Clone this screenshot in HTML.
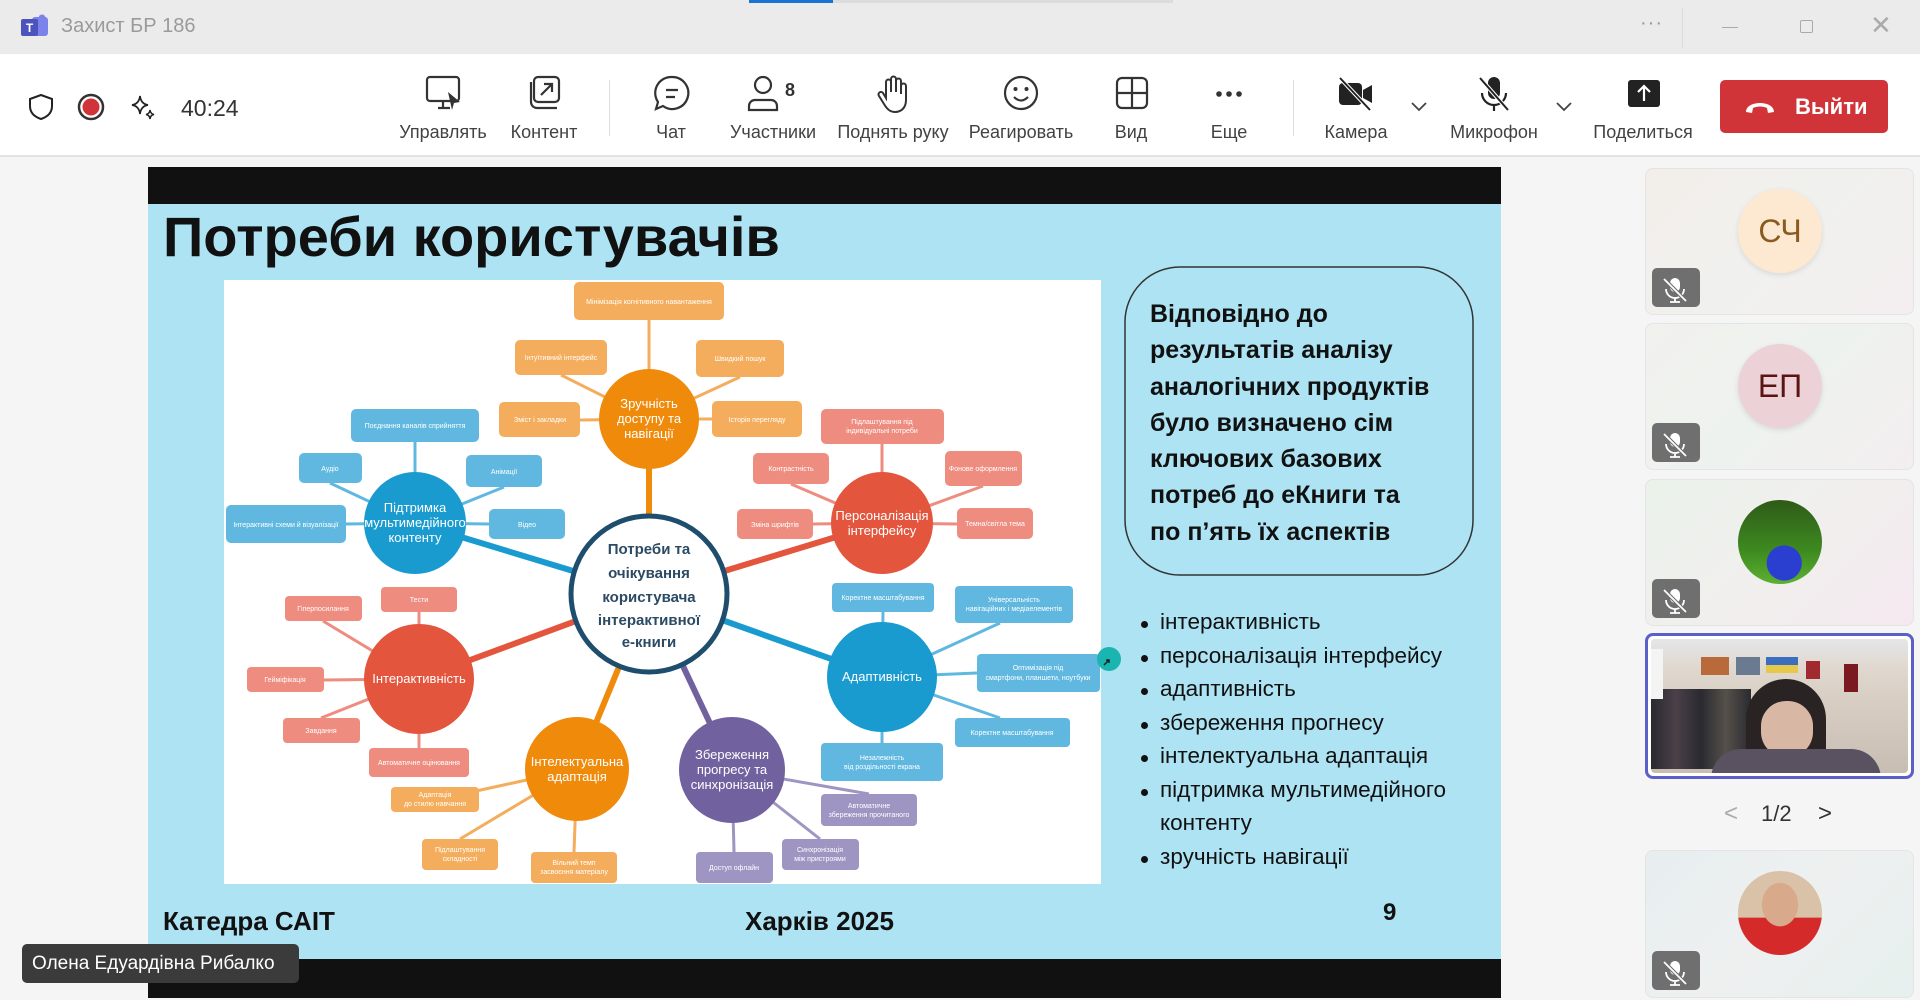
<!DOCTYPE html>
<html><head><meta charset="utf-8">
<style>
*{margin:0;padding:0;box-sizing:border-box}
body{width:1920px;height:1000px;overflow:hidden;background:#f5f5f5;font-family:"Liberation Sans","DejaVu Sans",sans-serif;position:relative}
.abs{position:absolute}
#title{left:0;top:0;width:1920px;height:54px;background:#ebebeb}
#tb{left:0;top:54px;width:1920px;height:103px;background:#fff;border-bottom:2px solid #e3e3e3}
.lbl{position:absolute;top:122px;font-size:18px;color:#424242;transform:translateX(-50%);white-space:nowrap}
.ic{position:absolute;top:74px}
.slide{left:148px;top:167px;width:1353px;height:831px;background:#ade3f3}
.bul{position:absolute;left:1141px;font-size:22.5px;color:#111;white-space:nowrap}
.bul:before{content:"";position:absolute;left:0;top:12px;width:7px;height:7px;border-radius:50%;background:#111}
.bul span{margin-left:19px}
.tile{position:absolute;left:1645px;width:269px;border-radius:8px;border:1px solid #e4e4e4;background:linear-gradient(135deg,#f3eeea,#f0f1ee 50%,#f4eef0)}
.mic{position:absolute;left:6px;bottom:7px;width:48px;height:39px;background:#6f6f6f;border-radius:5px}
.av{position:absolute;left:92px;width:84px;height:84px;border-radius:50%;font-size:32px;text-align:center;line-height:84px}
</style></head><body>
<div id="title" class="abs">
 <div class="abs" style="left:749px;top:0;width:84px;height:3px;background:#1a73d1"></div>
 <div class="abs" style="left:833px;top:0;width:340px;height:3px;background:#dcdcdc"></div>
 <svg class="abs" style="left:20px;top:14px" width="30" height="26" viewBox="0 0 30 26"><rect x="12" y="3" width="16" height="19" rx="3" fill="#7b83eb"/><circle cx="22" cy="4" r="3.5" fill="#7b83eb"/><rect x="1" y="5" width="17" height="17" rx="2" fill="#4b53bc"/><text x="9.5" y="18" font-size="12" font-weight="bold" fill="#fff" text-anchor="middle" font-family="Liberation Sans">T</text></svg>
 <div class="abs" style="left:61px;top:15px;font-size:20px;color:#9a9a9a">Захист БР 186</div>
 <div class="abs" style="left:1640px;top:12px;font-size:20px;color:#999;letter-spacing:1px">···</div>
 <div class="abs" style="left:1682px;top:8px;width:1px;height:40px;background:#ddd"></div>
 <div class="abs" style="left:1722px;top:27px;width:16px;height:1px;background:#aaa"></div>
 <div class="abs" style="left:1800px;top:20px;width:13px;height:13px;border:1px solid #aaa;border-radius:2px"></div>
 <div class="abs" style="left:1870px;top:10px;font-size:26px;color:#aaa">✕</div>
</div>
<div id="tb" class="abs"></div>
<svg class="abs" style="left:28px;top:93px" width="26" height="28" viewBox="0 0 26 28"><path d="M13 2 L24 6 V13 C24 20 19 24 13 26 C7 24 2 20 2 13 V6 Z" fill="none" stroke="#222" stroke-width="2"/></svg>
<svg class="abs" style="left:77px;top:93px" width="28" height="28"><circle cx="14" cy="14" r="12" fill="none" stroke="#333" stroke-width="2.5"/><circle cx="14" cy="14" r="8.5" fill="#d13438"/></svg>
<svg class="abs" style="left:130px;top:94px" width="28" height="28" viewBox="0 0 28 28"><path d="M10 2 Q11 10 18 11 Q11 12 10 20 Q9 12 2 11 Q9 10 10 2Z" fill="none" stroke="#222" stroke-width="1.7"/><path d="M20 16 Q20.5 20 24 20.5 Q20.5 21 20 25 Q19.5 21 16 20.5 Q19.5 20 20 16Z" fill="none" stroke="#222" stroke-width="1.5"/></svg>
<div class="abs" style="left:181px;top:95px;font-size:23px;color:#333">40:24</div>
<svg class="ic" style="left:424px" width="40" height="40" viewBox="0 0 40 40"><rect x="3" y="3" width="32" height="24" rx="3" fill="none" stroke="#333" stroke-width="2.2"/><path d="M14 34h12M19 27v7" stroke="#333" stroke-width="2.2"/><path d="M24 18 L36 28 L30 29 L28 36 Z" fill="#333"/></svg>
<svg class="ic" style="left:527px" width="36" height="40" viewBox="0 0 36 40"><rect x="7" y="3" width="25" height="25" rx="4" fill="none" stroke="#333" stroke-width="2.2"/><path d="M4 8v20a6 6 0 0 0 6 6h20" fill="none" stroke="#333" stroke-width="2.2"/><path d="M14 21 L25 10 M17 10h8v8" fill="none" stroke="#333" stroke-width="2.2"/></svg>
<div class="abs" style="left:609px;top:80px;width:1px;height:56px;background:#ddd"></div>
<svg class="ic" style="left:652px" width="40" height="40" viewBox="0 0 40 40"><path d="M20 3a16 16 0 1 1-9 29l-7 3 2-7A16 16 0 0 1 20 3z" fill="none" stroke="#333" stroke-width="2.2"/><path d="M14 16h12M14 23h9" stroke="#333" stroke-width="2.2"/></svg>
<svg class="ic" style="left:745px" width="56" height="40" viewBox="0 0 56 40"><circle cx="18" cy="11" r="8" fill="none" stroke="#333" stroke-width="2.2"/><path d="M4 36v-4a6 6 0 0 1 6-6h16a6 6 0 0 1 6 6v4z" fill="none" stroke="#333" stroke-width="2.2"/><text x="40" y="22" font-size="18" font-weight="bold" fill="#333" font-family="Liberation Sans">8</text></svg>
<svg class="ic" style="left:876px" width="36" height="40" viewBox="0 0 36 40"><path d="M10 24V8a2.5 2.5 0 0 1 5 0v10V5a2.5 2.5 0 0 1 5 0v13V7a2.5 2.5 0 0 1 5 0v13-8a2.5 2.5 0 0 1 5 0v14c0 8-5 12-11 12-5 0-8-3-11-8l-5-8a2.5 2.5 0 0 1 4-3z" fill="none" stroke="#333" stroke-width="2"/></svg>
<svg class="ic" style="left:1002px" width="38" height="40" viewBox="0 0 38 40"><circle cx="19" cy="19" r="16" fill="none" stroke="#333" stroke-width="2.2"/><circle cx="13.5" cy="15" r="2" fill="#333"/><circle cx="24.5" cy="15" r="2" fill="#333"/><path d="M12 23q7 7 14 0" fill="none" stroke="#333" stroke-width="2.2"/></svg>
<svg class="ic" style="left:1114px" width="36" height="40" viewBox="0 0 36 40"><rect x="3" y="4" width="30" height="30" rx="5" fill="none" stroke="#333" stroke-width="2.2"/><path d="M18 4v30M3 19h30" stroke="#333" stroke-width="2.2"/></svg>
<svg class="ic" style="left:1211px" width="36" height="40"><circle cx="8" cy="20" r="2.8" fill="#333"/><circle cx="18" cy="20" r="2.8" fill="#333"/><circle cx="28" cy="20" r="2.8" fill="#333"/></svg>
<div class="abs" style="left:1293px;top:80px;width:1px;height:56px;background:#ddd"></div>
<svg class="ic" style="left:1336px" width="40" height="40" viewBox="0 0 40 40"><rect x="3" y="9" width="23" height="22" rx="4" fill="#222"/><path d="M27 16l9-5v18l-9-5z" fill="#222"/><path d="M4 4 L34 36" stroke="#fff" stroke-width="4"/><path d="M4 4 L34 36" stroke="#222" stroke-width="2"/></svg>
<svg class="abs" style="left:1409px;top:100px" width="20" height="14"><path d="M3 3 L10 10 L17 3" fill="none" stroke="#444" stroke-width="1.8"/></svg>
<svg class="ic" style="left:1474px" width="40" height="40" viewBox="0 0 40 40"><rect x="14" y="3" width="12" height="22" rx="6" fill="#222"/><path d="M8 19a12 12 0 0 0 24 0M20 31v6" fill="none" stroke="#222" stroke-width="2.2"/><path d="M6 4 L34 36" stroke="#fff" stroke-width="4"/><path d="M6 4 L34 36" stroke="#222" stroke-width="2"/></svg>
<svg class="abs" style="left:1554px;top:100px" width="20" height="14"><path d="M3 3 L10 10 L17 3" fill="none" stroke="#444" stroke-width="1.8"/></svg>
<svg class="ic" style="left:1625px" width="38" height="40" viewBox="0 0 38 40"><rect x="3" y="6" width="32" height="27" rx="3" fill="#222"/><path d="M19 27V13M13 18l6-6 6 6" fill="none" stroke="#fff" stroke-width="2.2"/></svg>
<div class="lbl" style="left:443px">Управлять</div>
<div class="lbl" style="left:544px">Контент</div>
<div class="lbl" style="left:671px">Чат</div>
<div class="lbl" style="left:773px">Участники</div>
<div class="lbl" style="left:893px">Поднять руку</div>
<div class="lbl" style="left:1021px">Реагировать</div>
<div class="lbl" style="left:1131px">Вид</div>
<div class="lbl" style="left:1229px">Еще</div>
<div class="lbl" style="left:1356px">Камера</div>
<div class="lbl" style="left:1494px">Микрофон</div>
<div class="lbl" style="left:1643px">Поделиться</div>
<div class="abs" style="left:1720px;top:80px;width:168px;height:53px;background:#d13438;border-radius:5px;color:#fff;font-weight:bold;font-size:22px;line-height:53px;padding-left:75px">Выйти</div>
<svg class="abs" style="left:1743px;top:98px" width="34" height="18" viewBox="0 0 34 18"><path d="M3 14 C3 2 31 2 31 14 L25 15 L24 10 C20 8 14 8 10 10 L9 15 Z" fill="#fff"/></svg>

<div class="abs" style="left:148px;top:167px;width:1353px;height:37px;background:#111"></div>
<div class="abs slide" style="top:204px;height:755px"></div>
<div class="abs" style="left:148px;top:959px;width:1353px;height:39px;background:#111"></div>
<div class="abs" style="left:163px;top:204px;font-size:56px;font-weight:bold;color:#111">Потреби користувачів</div>
<div class="abs" style="left:224px;top:280px;width:877px;height:604px;background:#fff"></div>
<svg class="abs" style="left:0;top:0" width="1920" height="1000" font-family="Liberation Sans, sans-serif">
<g stroke-width="3">
 <g stroke="#f4ad5c"><line x1="649" y1="320" x2="649" y2="419"/><line x1="561" y1="375" x2="649" y2="419"/><line x1="580" y1="420" x2="649" y2="419"/><line x1="740" y1="377" x2="649" y2="419"/><line x1="712" y1="419" x2="649" y2="419"/>
 <line x1="435" y1="800" x2="577" y2="769"/><line x1="460" y1="839" x2="577" y2="769"/><line x1="574" y1="852" x2="577" y2="769"/></g>
 <g stroke="#60b8e0"><line x1="415" y1="442" x2="415" y2="523"/><line x1="330" y1="483" x2="415" y2="523"/><line x1="504" y1="487" x2="415" y2="523"/><line x1="346" y1="524" x2="415" y2="523"/><line x1="489" y1="524" x2="415" y2="523"/>
 <line x1="883" y1="612" x2="882" y2="677"/><line x1="1000" y1="623" x2="882" y2="677"/><line x1="977" y1="673" x2="882" y2="677"/><line x1="1000" y1="718" x2="882" y2="677"/><line x1="882" y1="743" x2="882" y2="677"/></g>
 <g stroke="#ee8c80"><line x1="882" y1="444" x2="882" y2="523"/><line x1="791" y1="484" x2="882" y2="523"/><line x1="983" y1="486" x2="882" y2="523"/><line x1="813" y1="524" x2="882" y2="523"/><line x1="957" y1="524" x2="882" y2="523"/>
 <line x1="419" y1="612" x2="419" y2="679"/><line x1="323" y1="621" x2="419" y2="679"/><line x1="324" y1="680" x2="419" y2="679"/><line x1="321" y1="718" x2="419" y2="679"/><line x1="419" y1="748" x2="419" y2="679"/></g>
 <g stroke="#9f95c2"><line x1="869" y1="794" x2="732" y2="770"/><line x1="820" y1="839" x2="732" y2="770"/><line x1="734" y1="852" x2="732" y2="770"/></g>
</g>
<g stroke-width="6">
 <line x1="649" y1="594" x2="649" y2="419" stroke="#ef8a0b"/>
 <line x1="649" y1="594" x2="415" y2="523" stroke="#1a9bd0"/>
 <line x1="649" y1="594" x2="882" y2="523" stroke="#e4553d"/>
 <line x1="649" y1="594" x2="882" y2="677" stroke="#1a9bd0"/>
 <line x1="649" y1="594" x2="419" y2="679" stroke="#e4553d"/>
 <line x1="649" y1="594" x2="577" y2="769" stroke="#ef8a0b"/>
 <line x1="649" y1="594" x2="732" y2="770" stroke="#72619f"/>
</g>
<g fill="#f4ad5c"><rect x="574" y="282" width="150" height="38" rx="5"/><rect x="515" y="340" width="92" height="35" rx="5"/><rect x="499" y="402" width="81" height="35" rx="5"/><rect x="696" y="340" width="88" height="37" rx="5"/><rect x="712" y="401" width="90" height="36" rx="5"/>
<rect x="391" y="787" width="88" height="25" rx="4"/><rect x="422" y="839" width="76" height="31" rx="4"/><rect x="531" y="852" width="86" height="31" rx="4"/></g>
<g fill="#60b8e0"><rect x="351" y="409" width="128" height="33" rx="5"/><rect x="299" y="453" width="63" height="30" rx="5"/><rect x="466" y="455" width="76" height="32" rx="5"/><rect x="226" y="505" width="120" height="38" rx="5"/><rect x="489" y="509" width="76" height="30" rx="5"/>
<rect x="832" y="583" width="102" height="29" rx="4"/><rect x="955" y="586" width="118" height="37" rx="4"/><rect x="977" y="654" width="123" height="38" rx="4"/><rect x="955" y="718" width="115" height="29" rx="4"/><rect x="821" y="743" width="122" height="38" rx="4"/></g>
<g fill="#ee8c80"><rect x="821" y="409" width="123" height="35" rx="5"/><rect x="753" y="453" width="76" height="31" rx="5"/><rect x="945" y="451" width="77" height="35" rx="5"/><rect x="737" y="509" width="76" height="30" rx="5"/><rect x="957" y="508" width="76" height="31" rx="5"/>
<rect x="381" y="587" width="76" height="25" rx="4"/><rect x="285" y="596" width="77" height="25" rx="4"/><rect x="247" y="667" width="77" height="25" rx="4"/><rect x="283" y="718" width="77" height="25" rx="4"/><rect x="369" y="748" width="100" height="29" rx="4"/></g>
<g fill="#9f95c2"><rect x="821" y="794" width="96" height="32" rx="4"/><rect x="782" y="839" width="77" height="31" rx="4"/><rect x="696" y="852" width="77" height="31" rx="4"/></g>
<g fill="#fff" font-size="7" text-anchor="middle">
<text x="649" y="304">Мінімізація когнітивного навантаження</text><text x="561" y="360">Інтуїтивний інтерфейс</text><text x="540" y="422">Зміст і закладки</text><text x="740" y="361">Швидкий пошук</text><text x="757" y="422">Історія перегляду</text>
<text x="435" y="797">Адаптація</text><text x="435" y="806">до стилю навчання</text><text x="460" y="852">Підлаштування</text><text x="460" y="861">складності</text><text x="574" y="865">Вільний темп</text><text x="574" y="874">засвоєння матеріалу</text>
<text x="415" y="428">Поєднання каналів сприйняття</text><text x="330" y="471">Аудіо</text><text x="504" y="474">Анімації</text><text x="286" y="527">Інтерактивні схеми й візуалізації</text><text x="527" y="527">Відео</text>
<text x="883" y="600">Коректне масштабування</text><text x="1014" y="602">Універсальність</text><text x="1014" y="611">навігаційних і медіаелементів</text><text x="1038" y="670">Оптимізація під</text><text x="1038" y="680">смартфони, планшети, ноутбуки</text><text x="1012" y="735">Коректне масштабування</text><text x="882" y="760">Незалежність</text><text x="882" y="769">від роздільності екрана</text>
<text x="882" y="424">Підлаштування під</text><text x="882" y="433">індивідуальні потреби</text><text x="791" y="471">Контрастність</text><text x="983" y="471">Фонове оформлення</text><text x="775" y="527">Зміна шрифтів</text><text x="995" y="526">Темна/світла тема</text>
<text x="419" y="602">Тести</text><text x="323" y="611">Гіперпосилання</text><text x="285" y="682">Гейміфікація</text><text x="321" y="733">Завдання</text><text x="419" y="765">Автоматичне оцінювання</text>
<text x="869" y="808">Автоматичне</text><text x="869" y="817">збереження прочитаного</text><text x="820" y="852">Синхронізація</text><text x="820" y="861">між пристроями</text><text x="734" y="870">Доступ офлайн</text>
</g>
<circle cx="649" cy="419" r="50" fill="#ef8a0b"/><circle cx="415" cy="523" r="51" fill="#1a9bd0"/><circle cx="882" cy="523" r="51" fill="#e4553d"/><circle cx="882" cy="677" r="55" fill="#1a9bd0"/><circle cx="419" cy="679" r="55" fill="#e4553d"/><circle cx="577" cy="769" r="52" fill="#ef8a0b"/><circle cx="732" cy="770" r="53" fill="#72619f"/>
<circle cx="649" cy="594" r="78" fill="#fff" stroke="#1e4d6e" stroke-width="5"/>
<g fill="#fff" font-size="13" text-anchor="middle">
<text x="649" y="408">Зручність</text><text x="649" y="423">доступу та</text><text x="649" y="438">навігації</text>
<text x="415" y="512">Підтримка</text><text x="415" y="527">мультимедійного</text><text x="415" y="542">контенту</text>
<text x="882" y="520">Персоналізація</text><text x="882" y="535">інтерфейсу</text>
<text x="882" y="681">Адаптивність</text><text x="419" y="683">Інтерактивність</text>
<text x="577" y="766">Інтелектуальна</text><text x="577" y="781">адаптація</text>
<text x="732" y="759">Збереження</text><text x="732" y="774">прогресу та</text><text x="732" y="789">синхронізація</text>
</g>
<g fill="#2b4a63" font-size="15" font-weight="bold" text-anchor="middle">
<text x="649" y="554">Потреби та</text><text x="649" y="578">очікування</text><text x="649" y="602">користувача</text><text x="649" y="625">інтерактивної</text><text x="649" y="647">е-книги</text>
</g>
<circle cx="1109" cy="659" r="12" fill="#1ab5b0"/><path d="M1104 665 l5-5 m-3 0 h3 v3" stroke="#222" stroke-width="1.5" fill="none"/>
<rect x="1125" y="267" width="348" height="308" rx="55" fill="none" stroke="#333" stroke-width="1.5"/>
</svg>
<div class="abs" style="left:1150px;top:296px;font-size:25px;font-weight:bold;line-height:36.3px;color:#111">Відповідно до<br>результатів аналізу<br>аналогічних продуктів<br>було визначено сім<br>ключових базових<br>потреб до еКниги та<br>по п’ять їх аспектів</div>
<div class="bul" style="top:609px"><span>інтерактивність</span></div>
<div class="bul" style="top:643px"><span>персоналізація інтерфейсу</span></div>
<div class="bul" style="top:676px"><span>адаптивність</span></div>
<div class="bul" style="top:710px"><span>збереження прогнесу</span></div>
<div class="bul" style="top:743px"><span>інтелектуальна адаптація</span></div>
<div class="bul" style="top:777px"><span>підтримка мультимедійного</span></div>
<div class="abs" style="left:1160px;top:810px;font-size:22.5px;color:#111">контенту</div>
<div class="bul" style="top:844px"><span>зручність навігації</span></div>
<div class="abs" style="left:163px;top:906px;font-size:26px;font-weight:bold;color:#111">Катедра САІТ</div>
<div class="abs" style="left:745px;top:906px;font-size:26px;font-weight:bold;color:#111">Харків 2025</div>
<div class="abs" style="left:1383px;top:899px;font-size:24px;font-weight:bold;color:#111">9</div>
<div class="abs" style="left:22px;top:944px;width:277px;height:39px;background:#3b3b3b;border-radius:5px;color:#fff;font-size:19px;line-height:39px;padding-left:10px">Олена Едуардівна Рибалко</div>

<div class="tile" style="top:168px;height:147px"><div class="av" style="top:20px;background:#fde9d2;color:#8a5a1e;box-shadow:0 2px 6px rgba(0,0,0,.1)">СЧ</div><div class="mic"></div></div>
<div class="tile" style="top:323px;height:147px;background:linear-gradient(135deg,#f1f1ee,#eef2ee 50%,#f3eef0)"><div class="av" style="top:20px;background:#ecd2d6;color:#5a1414;box-shadow:0 2px 6px rgba(0,0,0,.1)">ЕП</div><div class="mic"></div></div>
<div class="tile" style="top:479px;height:147px;background:linear-gradient(135deg,#eaf2ea,#f1efee 50%,#f4e9ef)"><div class="av" style="top:20px;background:radial-gradient(circle at 55% 75%,#2a3fd0 0 22%,transparent 23%),linear-gradient(180deg,#2f5a18,#3d8a20 60%,#5cb030)"></div><div class="mic"></div></div>
<div class="abs" style="left:1645px;top:633px;width:269px;height:146px;border:3px solid #5b5fc7;border-radius:8px;padding:3px;background:#fff">
 <div style="width:100%;height:100%;border-radius:4px;background:linear-gradient(180deg,#e4e6e8 0,#e0d9d0 20%,#d8cec3 45%,#c8bdb2 100%);position:relative;overflow:hidden">
  <div class="abs" style="left:0;top:50px;width:100px;height:80px;background:linear-gradient(90deg,#2a2a30,#4a4048,#2a2a30,#55504a,#2a2a30)"></div>
  <div class="abs" style="left:0;top:10px;width:12px;height:50px;background:#f4f4f4"></div>
  <div class="abs" style="left:50px;top:18px;width:28px;height:18px;background:#b86a3a"></div>
  <div class="abs" style="left:85px;top:18px;width:24px;height:18px;background:#6a7a90"></div>
  <div class="abs" style="left:115px;top:18px;width:32px;height:16px;background:#e6c84a;border-top:8px solid #3a6fbf"></div>
  <div class="abs" style="left:155px;top:22px;width:14px;height:18px;background:#a02a30"></div>
  <div class="abs" style="left:193px;top:25px;width:14px;height:28px;background:#7a1a20"></div>
  <div class="abs" style="left:95px;top:40px;width:80px;height:90px;border-radius:40px 40px 10px 10px;background:#2a2324"></div>
  <div class="abs" style="left:110px;top:62px;width:52px;height:56px;border-radius:25px;background:#d9b7a5"></div>
  <div class="abs" style="left:60px;top:110px;width:170px;height:30px;border-radius:30px 30px 0 0;background:#5a5260"></div>
 </div>
</div>
<div class="abs" style="left:1724px;top:800px;font-size:24px;color:#aaa">&lt;</div>
<div class="abs" style="left:1761px;top:801px;font-size:22px;color:#333">1/2</div>
<div class="abs" style="left:1818px;top:800px;font-size:24px;color:#333">&gt;</div>
<div class="tile" style="top:850px;height:148px;background:linear-gradient(135deg,#e7eef0,#eef0f0 50%,#e6f0ee)"><div class="av" style="top:20px;background:radial-gradient(ellipse at 50% 40%,#d9a98c 0 30%,transparent 31%),linear-gradient(180deg,#d9c2a8 0 55%,#d42a2a 56%)"></div><div class="mic"></div></div>
<svg class="abs" style="left:0;top:0;pointer-events:none" width="1920" height="1000">
<defs><g id="m"><rect x="-5" y="-10" width="10" height="14" rx="5" fill="#fff"/><path d="M-9 1a9 9 0 0 0 18 0M0 10v4M-5 14h10" fill="none" stroke="#fff" stroke-width="1.8"/><path d="M-11 -9 L11 13" stroke="#6f6f6f" stroke-width="4"/><path d="M-11 -9 L11 13" stroke="#fff" stroke-width="1.8"/></g></defs>
<use href="#m" x="1675" y="288"/><use href="#m" x="1675" y="443"/><use href="#m" x="1675" y="599"/><use href="#m" x="1675" y="971"/>
</svg>
</body></html>
